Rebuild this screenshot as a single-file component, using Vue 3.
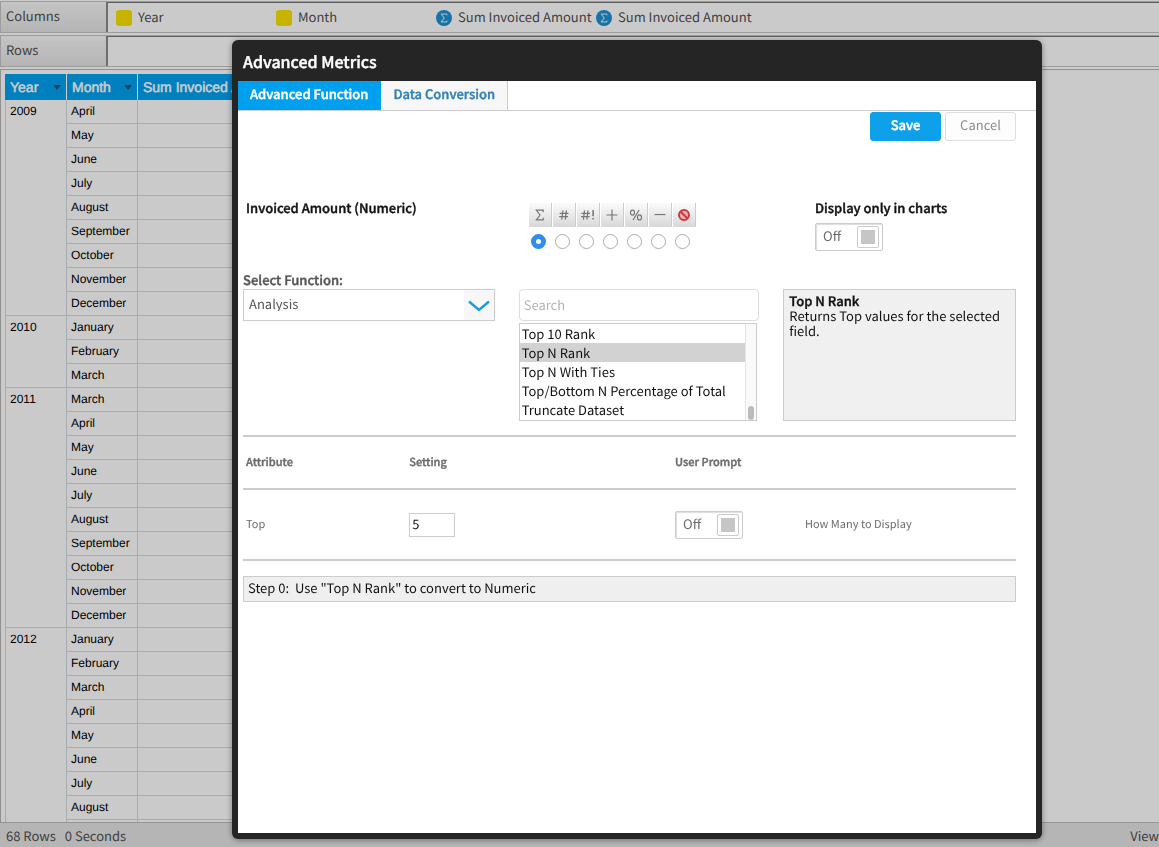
<script setup>
import { ref } from 'vue'

const fields = [
  { kind: 'dim', name: 'Year' },
  { kind: 'dim', name: 'Month' },
  { kind: 'sum', name: 'Sum Invoiced Amount' },
  { kind: 'sum', name: 'Sum Invoiced Amount' },
]

const months = ['January', 'February', 'March', 'April', 'May', 'June', 'July', 'August', 'September', 'October', 'November', 'December']
const years = [
  { year: '2009', months: months.slice(3) },
  { year: '2010', months: months.slice(0, 3) },
  { year: '2011', months: months.slice(2) },
  { year: '2012', months: [...months.slice(0, 8), ''] },
]

const formats = ['sum', 'number', 'exact', 'plus', 'percent', 'minus', 'none']
const format = ref('sum')
const chartsOnly = ref(false)
const prompt = ref(false)
const category = ref('Analysis')
const functions = ['Top 10 Rank', 'Top N Rank', 'Top N With Ties', 'Top/Bottom N Percentage of Total', 'Truncate Dataset']
const selected = ref('Top N Rank')
const search = ref('')
const top = ref('5')
</script>

<template>
  <div class="page">
    <div class="shelf">
      <div class="shelf-label">Columns</div>
      <div class="shelf-field">
        <span v-for="(f, i) in fields" :key="i" class="pill">
          <span v-if="f.kind === 'dim'" class="swatch"></span>
          <svg v-else class="sigma" viewBox="0 0 17 17" aria-hidden="true">
            <circle cx="8.5" cy="8.5" r="8.5" fill="#1d90d0" />
            <path d="M11.6 5.6V4.3H5.4L8.8 8.5L5.4 12.7H11.6V11.4" fill="none" stroke="#fff" stroke-width="1" />
          </svg>
          <span class="pill-name">{{ f.name }}</span>
        </span>
      </div>
    </div>
    <div class="shelf">
      <div class="shelf-label">Rows</div>
      <div class="shelf-field"></div>
    </div>
    <div class="report">
      <table class="data">
        <colgroup><col class="c-year" /><col class="c-month" /><col /></colgroup>
        <thead>
          <tr>
            <th><span class="head">Year<i class="caret"></i></span></th>
            <th><span class="head">Month<i class="caret"></i></span></th>
            <th>Sum Invoiced Amount</th>
          </tr>
        </thead>
        <tbody>
          <template v-for="y in years" :key="y.year">
            <tr v-for="(m, i) in y.months" :key="m">
              <td v-if="i === 0" :rowspan="y.months.length">{{ y.year }}</td>
              <td>{{ m }}</td>
              <td></td>
            </tr>
          </template>
        </tbody>
      </table>
    </div>
    <footer class="status">
      <span>68 Rows</span><span>0 Seconds</span><span class="view">View</span>
    </footer>
  </div>

  <div class="overlay">
    <section class="modal" role="dialog" aria-labelledby="dialog-title">
      <h1 id="dialog-title">Advanced Metrics</h1>
      <nav class="tabs">
        <button type="button" class="tab active">Advanced Function</button>
        <button type="button" class="tab">Data Conversion</button>
      </nav>
      <div class="body">
        <div class="actions">
          <button type="button" class="btn primary">Save</button>
          <button type="button" class="btn">Cancel</button>
        </div>

        <div class="metric">
          <div class="metric-name">Invoiced Amount (Numeric)</div>
          <div class="formats">
            <label v-for="f in formats" :key="f" class="format">
              <span class="format-icon">
                <svg viewBox="0 0 24 24" :aria-label="f">
                  <path v-if="f === 'sum'" d="M15.5 9V6.7H8L12 12L8 17.3H15.5V15" />
                  <path v-else-if="f === 'number'" d="M10.8 7L9.6 17M14.6 7L13.4 17M7.2 10.2H16.8M6.8 13.8H16.4" />
                  <template v-else-if="f === 'exact'">
                    <path d="M8.2 7L7 17M12 7L10.8 17M4.8 10.2H14.2M4.4 13.8H13.8" />
                    <path d="M17.6 6.6V13.4M17.6 15.2V17" stroke-width="1.7" />
                  </template>
                  <path v-else-if="f === 'plus'" d="M12 6V18M6 12H18" />
                  <template v-else-if="f === 'percent'">
                    <ellipse cx="8.2" cy="9.4" rx="2.2" ry="2.8" />
                    <ellipse cx="15.8" cy="14.6" rx="2.2" ry="2.8" />
                    <path d="M15.4 6.6L8.8 17.4" />
                  </template>
                  <path v-else-if="f === 'minus'" d="M6 11.5H18" />
                  <g v-else class="ban">
                    <circle cx="12" cy="12" r="5.4" />
                    <path d="M8.4 8.4L15.6 15.6" />
                  </g>
                </svg>
              </span>
              <input v-model="format" type="radio" name="format" :value="f" />
            </label>
          </div>
          <div class="charts">
            <label for="charts-only" class="charts-label">Display only in charts</label>
            <label class="toggle"><span>Off</span><input id="charts-only" v-model="chartsOnly" type="checkbox" /></label>
          </div>
        </div>

        <div class="picker">
          <div class="category">
            <label for="category">Select Function:</label>
            <div class="select">
              <select id="category" v-model="category"><option>Analysis</option></select>
              <svg viewBox="0 0 30 30" aria-hidden="true"><path d="M5 11.5L15 20L25 11.5" fill="none" stroke="#1a9bdc" stroke-width="2.4" /></svg>
            </div>
          </div>
          <div class="finder">
            <input v-model="search" class="search" type="text" placeholder="Search" aria-label="Search" />
            <div class="listbox">
              <select v-model="selected" size="5" aria-label="Function">
                <option v-for="f in functions" :key="f">{{ f }}</option>
              </select>
              <div class="track"><div class="thumb"></div></div>
            </div>
          </div>
          <div class="info">
            <div class="info-title">Top N Rank</div>
            <div>Returns Top values for the selected field.</div>
          </div>
        </div>

        <table class="attributes">
          <colgroup><col class="a1" /><col class="a2" /><col class="a3" /><col /></colgroup>
          <thead>
            <tr><th>Attribute</th><th>Setting</th><th>User Prompt</th><th></th></tr>
          </thead>
          <tbody>
            <tr>
              <td><label for="top">Top</label></td>
              <td><input id="top" v-model="top" class="number" type="text" /></td>
              <td><label class="toggle"><span>Off</span><input v-model="prompt" type="checkbox" aria-label="User Prompt" /></label></td>
              <td class="hint">How Many to Display</td>
            </tr>
          </tbody>
        </table>

        <div class="step">Step 0:&nbsp; Use "Top N Rank" to convert to Numeric</div>
      </div>
    </section>
  </div>
</template>

<style>
body {
  margin: 0;
  overflow: hidden;
}
</style>

<style scoped>
.page,
.overlay {
  font-family: "Noto Sans CJK SC", sans-serif;
  font-size: 13px;
  line-height: 15px;
  text-rendering: geometricPrecision;
  box-sizing: border-box;
}
.page *,
.overlay * {
  box-sizing: border-box;
}
button,
input,
select {
  font: inherit;
  margin: 0;
  text-rendering: inherit;
}
.page {
  height: 100vh;
  display: flex;
  flex-direction: column;
  background: #fdfdfd;
  color: #505050;
}
.shelf {
  display: flex;
  flex: none;
  height: 32px;
  margin-top: 1px;
  margin-bottom: 1px;
  border: 1px solid #c4c4c4;
  border-right: 0;
}
.shelf-label {
  width: 105px;
  padding: 6px 5px;
  background: linear-gradient(#f6f6f6, #e2e2e2);
}
.shelf-field {
  flex: 1;
  display: flex;
  padding-left: 8px;
  border-top: 1px solid #777;
  border-left: 2px solid #8a8a8a;
}
.pill {
  display: flex;
  align-items: center;
  gap: 6px;
  width: 160px;
  white-space: nowrap;
}
.pill-name {
  padding-bottom: 3px;
}
.swatch {
  width: 16px;
  height: 16px;
  border-radius: 3px;
  background: #f8e100;
}
.sigma {
  width: 16px;
  height: 16px;
}
.report {
  flex: 1;
  min-height: 0;
  overflow: hidden;
  margin-top: 1px;
  padding: 4px 0 0 4px;
  border-top: 1px solid #b4b4b4;
  border-left: 1px solid #b4b4b4;
}
.data {
  width: 60%;
  table-layout: fixed;
  border-spacing: 0;
  font: 12px/15px "Liberation Sans", Arial, sans-serif;
  color: #000;
}
.c-year {
  width: 62px;
}
.c-month {
  width: 71px;
}
.data th {
  height: 26px;
  padding: 0 5px;
  border-right: 1px solid #fff;
  background: #00a0ee;
  color: #fff;
  font-size: 14px;
  font-weight: normal;
  text-align: left;
  -webkit-text-stroke: 0.5px #fff;
}
.head {
  display: flex;
  align-items: center;
  justify-content: space-between;
}
.caret {
  border: 4px solid transparent;
  border-top: 5px solid #14547c;
  border-bottom: 0;
}
.data td {
  height: 24px;
  padding: 4px;
  border-right: 1px solid #cfd9dc;
  border-bottom: 1px solid #cfd9dc;
  vertical-align: top;
}
.data td:last-child {
  border-right: 0;
}
.data td[rowspan] {
  border-left: 1px solid #cfd9dc;
}
.status {
  flex: none;
  display: flex;
  align-items: center;
  gap: 9px;
  height: 25px;
  padding: 1px 0 0 6px;
  border-top: 1px solid #bbb;
  background: #e3e3e3;
}
.view {
  margin-left: auto;
}
.overlay {
  position: fixed;
  inset: 0;
  padding: 40px 117px 8px 232px;
  background: rgba(0, 0, 0, 0.2);
}
.modal {
  height: 100%;
  display: flex;
  flex-direction: column;
  padding: 0 6px 6px;
  border-radius: 6px;
  background: #252525;
  box-shadow: 0 1px 6px rgba(0, 0, 0, 0.4);
}
h1,
.tab,
.btn.primary,
.metric-name,
.charts-label,
.category label,
.info-title,
.attributes th {
  font-weight: 500;
  -webkit-text-stroke: 0.4px currentColor;
}
h1 {
  margin: 0;
  padding: 11px 5px 9px;
  color: #fff;
  font-size: 16px;
  line-height: 21px;
}
.tabs {
  display: flex;
  border-bottom: 1px solid #ccc;
  background: #fff;
}
.tab {
  height: 29px;
  padding: 0 12px 4px;
  border: 0;
  border-right: 1px solid #ccc;
  background: #f7f7f7;
  color: #3181b8;
}
.tab.active {
  border-right-color: #00a0ee;
  background: #00a0ee;
  color: #fff;
}
.body {
  flex: 1;
  padding: 1px 20px 0 5px;
  background: #fff;
  color: #555;
}
.actions {
  display: flex;
  justify-content: flex-end;
  gap: 4px;
}
.btn {
  width: 71px;
  height: 29px;
  padding: 0 0 4px;
  border: 1px solid #ddd;
  border-radius: 3px;
  background: #fdfdfd;
  color: #8c8c8c;
}
.btn.primary {
  border-color: #0fa0ea;
  background: #0fa0ea;
  color: #fff;
}
.metric {
  display: grid;
  grid-template-columns: 285fr 287fr 201fr;
  margin-top: 59px;
  color: #111;
}
.metric-name {
  padding-left: 3px;
}
.formats {
  display: flex;
  margin-top: 3px;
}
.format {
  width: 24px;
}
.format-icon {
  display: block;
  height: 24px;
  border-right: 1px solid #ccc;
  border-left: 1px solid #fff;
  background: linear-gradient(#fbfbfb, #d8d8d8);
}
.format-icon svg {
  display: block;
  width: 22px;
  height: 24px;
  fill: none;
  stroke: #777;
  stroke-width: 1.3;
}
.format-icon .ban {
  fill: #e9b4b4;
  stroke: #c93a40;
  stroke-width: 2.2;
}
.format input {
  appearance: none;
  display: block;
  width: 15px;
  height: 15px;
  margin: 7px 0 0 3px;
  border: 1px solid #aaa;
  border-radius: 50%;
  background: #fff;
}
.format input:checked {
  border: 5px solid #2f8eed;
}
.charts-label {
  display: block;
  margin-bottom: 8px;
}
.toggle {
  display: flex;
  align-items: center;
  justify-content: space-between;
  width: 68px;
  height: 28px;
  padding: 0 3px 0 7px;
  border: 1px solid #ccc;
  border-radius: 2px;
  box-shadow: inset 1px 1px 1px #ddd;
  background: #fff;
  color: #6c6c6c;
}
.toggle span {
  padding-bottom: 3px;
}
.toggle input {
  appearance: none;
  width: 22px;
  height: 22px;
  border: 1px solid #ccc;
  border-radius: 2px;
  background: #c6c6c6 content-box;
  padding: 3px;
}
.picker {
  display: grid;
  grid-template-columns: 252fr 241fr 233fr;
  column-gap: 24px;
  margin-top: 21px;
}
.category label {
  display: block;
  margin-bottom: 2px;
}
.select {
  position: relative;
}
.select select {
  display: block;
  appearance: none;
  width: 100%;
  height: 32px;
  padding: 0 5px 3px;
  border: 1px solid #ccc;
  border-radius: 0;
  background: linear-gradient(#f7f7f7, #f7f7f7) right / 30px 100% no-repeat #fff;
  color: #555;
}
.select svg {
  position: absolute;
  right: 1px;
  top: 1px;
  width: 30px;
  height: 30px;
  pointer-events: none;
}
.finder,
.info {
  margin-top: 17px;
}
.search {
  display: block;
  width: 100%;
  height: 32px;
  padding: 0 4px 2px;
  border: 1px solid #ddd;
  border-radius: 4px;
}
.search::placeholder {
  color: #b4b4b4;
}
.listbox {
  display: flex;
  height: 98px;
  margin: 2px 2px 0 0;
  border: 1px solid #ccc;
}
.listbox select {
  flex: 1;
  min-width: 0;
  height: 96px;
  padding: 0;
  border: 0;
  border-radius: 0;
  outline: 0;
  overflow: hidden;
  color: #111;
}
.listbox option {
  min-height: 19px;
  padding: 0 2px;
  color: #111;
}
.listbox option:checked {
  background: linear-gradient(#d2d2d2, #d2d2d2);
  color: #111;
}
.track {
  width: 11px;
  display: flex;
  align-items: flex-end;
  justify-content: center;
  border-left: 1px solid #e4e4e4;
  background: #fafafa;
}
.thumb {
  width: 6px;
  height: 14px;
  border-radius: 3px;
  background: #bcbcbc;
}
.info {
  padding: 3px 5px;
  border: 1px solid #ccc;
  background: #f0f0f0;
  color: #111;
}
.attributes {
  width: 100%;
  margin-top: 14px;
  table-layout: fixed;
  border-collapse: separate;
  border-spacing: 0;
  border-top: 2px solid #ccc;
  color: #6c6c6c;
  font-size: 11px;
}
.a1 {
  width: 21.5%;
}
.a2 {
  width: 34.4%;
}
.a3 {
  width: 16.8%;
}
.attributes th {
  height: 53px;
  padding: 0;
  border-bottom: 2px solid #ccc;
  text-align: left;
}
.attributes td {
  height: 71px;
  padding: 0;
  border-bottom: 2px solid #ccc;
}
.attributes th:first-child,
.attributes td:first-child {
  padding-left: 3px;
}
.attributes .toggle {
  font-size: 13px;
}
.number {
  display: block;
  width: 46px;
  height: 24px;
  padding: 0 2px 2px;
  border: 1px solid #ccc;
  color: #111;
  font-size: 13px;
}
.step {
  height: 26px;
  margin-top: 15px;
  padding: 3px 4px;
  border: 1px solid #ccc;
  background: #efefef;
  color: #111;
}
</style>
